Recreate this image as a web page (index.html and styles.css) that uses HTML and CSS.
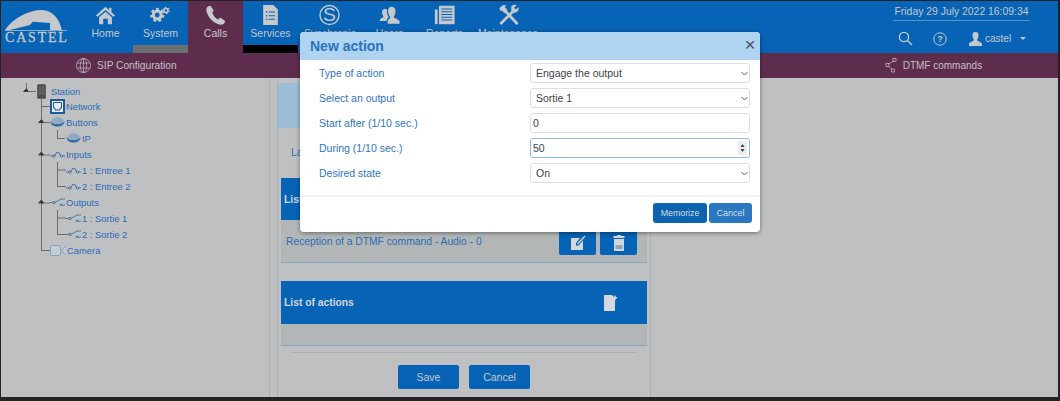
FILE: index.html
```html
<!DOCTYPE html>
<html lang="en">
<head>
<meta charset="utf-8">
<title>Castel - New action</title>
<link rel="stylesheet" href="styles.css">
</head>
<body>
<div class="app">
  <header class="topbar">
    <div class="logo">
      <svg class="logo-mark" width="64" height="32" viewBox="0 0 64 32"><path class="logo-dome" d="M0 21 C8 9 24 1 36.7 1 C48 1 55 11 56.7 21 L45 21 L45 14 L27.7 12.7 L25 16 L5 21 Z"/><path class="logo-rule" d="M0 21.5 L62 21.5"/></svg>
      <span class="logo-text">CASTEL</span>
    </div>
    <nav class="nav">
      <a class="nav-item"><svg class="nav-icon" viewBox="0 0 24 24"><path d="M12 3 L1.5 12.5 L3.5 14 L12 6.5 L20.5 14 L22.5 12.5 L18.5 9 V4 H16 V6.8 Z"/><path d="M5 14.5 L12 8.5 L19 14.5 V22 H14.5 V16 H9.5 V22 H5 Z"/></svg><span>Home</span></a>
      <a class="nav-item nav-grey"><svg class="nav-icon gears" viewBox="0 0 24 24"><circle class="g-ring" cx="8.5" cy="12" r="4.3"/><circle class="g-teeth" cx="8.5" cy="12" r="6.6"/><circle class="g-ring-s" cx="18" cy="7" r="2.1"/><circle class="g-teeth-s" cx="18" cy="7" r="3.4"/></svg><span>System</span></a>
      <a class="nav-item nav-active"><svg class="nav-icon" viewBox="0 0 24 24"><path d="M4 2.5 C2 3.5 1.5 6 2.5 9 C4.5 15 9 20 15 22 C18 23 21 22.5 22 20.5 L22.5 18.5 L17.5 15 L14.5 16.8 C12 15.5 9.5 12.5 8.5 9.5 L10 7 L6.5 1.8 Z"/></svg><span>Calls</span></a>
      <a class="nav-item nav-black"><svg class="nav-icon" viewBox="0 0 24 24"><path fill-rule="evenodd" d="M4 1 H15 L20 6 V23 H4 Z M7 8 V9.5 H8.5 V8 Z M10 8.2 V9.3 H17 V8.2 Z M7 12 V13.5 H8.5 V12 Z M10 12.2 V13.3 H17 V12.2 Z M7 16 V17.5 H8.5 V16 Z M10 16.2 V17.3 H17 V16.2 Z"/></svg><span>Services</span></a>
      <a class="nav-item"><svg class="nav-icon" viewBox="0 0 24 24"><circle class="icon-ring" cx="12" cy="12" r="10.4"/><text class="icon-s" x="12" y="19" text-anchor="middle">S</text></svg><span>Synchronis</span></a>
      <a class="nav-item"><svg class="nav-icon" viewBox="0 0 24 24"><path d="M14 3 C17.5 3 19 6 18.5 9 C18 12 17 13 16.5 14.5 C18 16 22 16.5 23 19 V21.5 H10 V19 C10 17 12.5 16 13 14.5 C12 13 11 12 10.5 9 C10 6 11.5 3 14 3 Z"/><path d="M7 5.5 C8 5.3 9 5.6 9.4 6 C8.8 8.5 9.2 11.5 11 14 C11 15 9 16 8.8 18.5 H1.5 V17 C2 15.5 5 15 5.5 13.5 C4.5 12 3.8 10.5 3.8 9 C3.8 7 5 5.7 7 5.5 Z"/></svg><span>Users</span></a>
      <a class="nav-item"><svg class="nav-icon" viewBox="0 0 24 24"><path fill-rule="evenodd" d="M6 2 H23 V22 H6 Z M8.5 5 V6 H20.5 V5 Z M8.5 8 V9 H20.5 V8 Z M8.5 11 V12 H20.5 V11 Z M8.5 14 V15 H20.5 V14 Z M8.5 17 V18 H20.5 V17 Z"/><path d="M1.5 6 H4.5 V22 H1.5 Z"/></svg><span>Reports</span></a>
      <a class="nav-item"><svg class="nav-icon tools-icon" viewBox="0 0 24 24"><path class="t-line" d="M7 6 L21 21"/><path class="t-line" d="M18 7 L4 21"/><path d="M2 4.5 L6 1 L9.5 1.5 L8 3.5 L11 6.5 L7.5 10 L5 7 L3.5 7.5 Z"/><path d="M15 3 C16 1 19 .5 21 1.2 L18 4 L20 6 L23 3.2 C23.5 6 22.5 8.5 19.5 9.5 L17 9.5 L15 7.5 Z"/></svg><span>Maintenance</span></a>
    </nav>
    <div class="top-right">
      <div class="clock">Friday 29 July 2022 16:09:34</div>
      <div class="tools">
        <svg class="tool-icon" width="15" height="15" viewBox="0 0 15 15"><circle cx="6" cy="6" r="4.6"/><path d="M9.5 9.5 L14 14"/></svg>
        <svg class="tool-icon tool-help" width="14" height="14" viewBox="0 0 14 14"><circle cx="7" cy="7" r="6.2"/><text x="7" y="10.3" text-anchor="middle">?</text></svg>
        <span class="user"><svg class="user-icon" width="13" height="14" viewBox="0 0 13 14"><path d="M6.5 0 C9 0 9.8 2 9.5 4 C9.2 6 8.5 7 8 8 C9 9.5 12.5 10 13 12 V14 H0 V12 C.5 10 4 9.5 5 8 C4.5 7 3.8 6 3.5 4 C3.2 2 4 0 6.5 0 Z"/></svg>castel<i class="caret"></i></span>
      </div>
    </div>
  </header>

  <div class="subbar">
    <a class="sub-item sub-sip"><svg width="15" height="15" viewBox="0 0 15 15" class="sub-icon"><circle cx="7.5" cy="7.5" r="7"/><ellipse cx="7.5" cy="7.5" rx="3.2" ry="7"/><path d="M7.5 .5 V14.5 M1 5 H14 M1 10 H14"/></svg>SIP Configuration</a>
    <a class="sub-item sub-dtmf"><svg width="12" height="15" viewBox="0 0 12 15" class="sub-icon"><rect x="8" y=".5" width="3" height="3"/><rect x="1" y="5.5" width="3" height="3"/><rect x="6.5" y="11" width="3" height="3"/><path d="M8.5 3 L3.5 6 M3.5 8 L7 11.5"/></svg>DTMF commands</a>
  </div>

  <main class="content">
    <aside class="tree">
      <svg class="tree-lines" width="100" height="175" viewBox="0 0 100 175">
        <path d="M26.5 5 V13.5 H36 M41.5 20 V172.5 H50 M41.5 28.5 H50 M41.5 44.5 H50 M41.5 77 H50 M41.5 125 H50 M57.5 52 V60.5 H65 M57.5 84 V92 H66 M57.5 92 V108.5 H66 M57.5 132 V140 H66 M57.5 140 V156.5 H66"/>
        <path class="tree-knob" d="M23.5 13.5 L26.5 10.5 L28 13.5 Z M38.5 44.5 L41.5 41.5 L43.5 44.5 Z M38.5 77 L41.5 74 L43.5 77 Z M38.5 125 L41.5 122 L43.5 125 Z"/>
      </svg>
      <div class="node n0"><svg width="9" height="15" viewBox="0 0 9 15" class="ic-station"><rect width="9" height="15" rx="1.5"/><path d="M3 2 V11 M6 2 V11"/></svg><span>Station</span></div>
      <div class="node n1"><svg width="15" height="15" viewBox="0 0 15 15" class="ic-net"><rect x="1" y="1" width="13" height="13"/><path d="M3.5 3.5 H11.5 V9 H10 V11 H5 V9 H3.5 Z"/></svg><span>Network</span></div>
      <div class="node n1"><svg width="15" height="10" viewBox="0 0 15 10" class="ic-btn"><ellipse cx="7.5" cy="3.5" rx="6" ry="3.2"/><path d="M.5 4 C.5 8 4 9.5 7.5 9.5 C11 9.5 14.5 8 14.5 4 C13 6.5 10 7 7.5 7 C5 7 2 6.5 .5 4 Z"/></svg><span>Buttons</span></div>
      <div class="node n2"><svg width="15" height="10" viewBox="0 0 15 10" class="ic-btn"><ellipse cx="7.5" cy="3.5" rx="6" ry="3.2"/><path d="M.5 4 C.5 8 4 9.5 7.5 9.5 C11 9.5 14.5 8 14.5 4 C13 6.5 10 7 7.5 7 C5 7 2 6.5 .5 4 Z"/></svg><span>IP</span></div>
      <div class="node n1"><svg width="15" height="7" viewBox="0 0 15 7" class="ic-sw"><path d="M0 5 H2.5 M5 5 L6.5 1.5 H9 L10.5 5 M12.5 5 H15"/><circle cx="3.8" cy="5" r="1.2"/><circle cx="11.5" cy="5" r="1.2"/></svg><span>Inputs</span></div>
      <div class="node n2"><svg width="15" height="7" viewBox="0 0 15 7" class="ic-sw"><path d="M0 5 H2.5 M5 5 L6.5 1.5 H9 L10.5 5 M12.5 5 H15"/><circle cx="3.8" cy="5" r="1.2"/><circle cx="11.5" cy="5" r="1.2"/></svg><span>1 : Entree 1</span></div>
      <div class="node n2"><svg width="15" height="7" viewBox="0 0 15 7" class="ic-sw"><path d="M0 5 H2.5 M5 5 L6.5 1.5 H9 L10.5 5 M12.5 5 H15"/><circle cx="3.8" cy="5" r="1.2"/><circle cx="11.5" cy="5" r="1.2"/></svg><span>2 : Entree 2</span></div>
      <div class="node n1"><svg width="15" height="8" viewBox="0 0 15 8" class="ic-sw"><path d="M0 4.5 H3 M5 4.5 L11 1 M11 1 H15 M12 7 H15"/><circle cx="4" cy="4.5" r="1.2"/><circle cx="11" cy="7" r="1"/></svg><span>Outputs</span></div>
      <div class="node n2"><svg width="15" height="8" viewBox="0 0 15 8" class="ic-sw"><path d="M0 4.5 H3 M5 4.5 L11 1 M11 1 H15 M12 7 H15"/><circle cx="4" cy="4.5" r="1.2"/><circle cx="11" cy="7" r="1"/></svg><span>1 : Sortie 1</span></div>
      <div class="node n2"><svg width="15" height="8" viewBox="0 0 15 8" class="ic-sw"><path d="M0 4.5 H3 M5 4.5 L11 1 M11 1 H15 M12 7 H15"/><circle cx="4" cy="4.5" r="1.2"/><circle cx="11" cy="7" r="1"/></svg><span>2 : Sortie 2</span></div>
      <div class="node n1"><svg width="16" height="11" viewBox="0 0 16 11" class="ic-cam"><rect x=".5" y=".5" width="10" height="10" rx="1"/><path d="M15.5 1 L12 5.5 L15.5 10"/></svg><span>Camera</span></div>
    </aside>

    <section class="panel">
      <div class="panel-head"></div>
      <div class="panel-label">Label</div>
      <div class="list-head">List of events</div>
      <div class="list-row">
        <span class="row-text">Reception of a DTMF command - Audio - 0</span>
        <span class="row-btns">
          <button class="icon-btn"><svg width="16" height="16" viewBox="0 0 16 16"><path class="paper" d="M1 3 H10 L6 8 V10.5 H8.5 L13 5.5 V15 H1 Z"/><path class="pen" d="M7.5 9 L15 1"/></svg></button>
          <button class="icon-btn"><svg width="12" height="16" viewBox="0 0 12 16"><path class="paper" d="M4 0 H8 V1 H11.5 V3 H.5 V1 H4 Z M1 4 H11 V16 H1 Z"/><rect class="tone" x="2.5" y="10" width="7" height="4"/></svg></button>
        </span>
      </div>
      <div class="list-head list-head-actions">List of actions
        <svg class="new-doc" width="14" height="16" viewBox="0 0 14 16"><path class="paper" d="M0 0 H8 L11 3 V16 H0 Z"/><path class="plus" d="M11 .5 V5 M8.8 2.7 H13.2"/></svg>
      </div>
      <div class="list-row list-row-empty"></div>
      <hr class="rule">
      <div class="panel-actions">
        <button class="btn">Save</button>
        <button class="btn">Cancel</button>
      </div>
    </section>
  </main>

  <div class="modal">
    <div class="modal-head"><h2>New action</h2><span class="close">×</span></div>
    <form class="modal-body">
      <div class="field"><label>Type of action</label><div class="control"><select><option>Engage the output</option></select><svg class="chev" width="7" height="5" viewBox="0 0 7 5"><path d="M.5 1 L3.5 4 L6.5 1"/></svg></div></div>
      <div class="field"><label>Select an output</label><div class="control"><select><option>Sortie 1</option></select><svg class="chev" width="7" height="5" viewBox="0 0 7 5"><path d="M.5 1 L3.5 4 L6.5 1"/></svg></div></div>
      <div class="field"><label>Start after (1/10 sec.)</label><div class="control"><input type="text" value="0"></div></div>
      <div class="field"><label>During (1/10 sec.)</label><div class="control"><input class="focused" type="text" value="50"><svg class="spin" width="9" height="14" viewBox="0 0 9 14"><rect width="9" height="14"/><path d="M4.5 3 L6.5 6 H2.5 Z M4.5 11 L6.5 8 H2.5 Z"/></svg></div></div>
      <div class="field"><label>Desired state</label><div class="control"><select><option>On</option></select><svg class="chev" width="7" height="5" viewBox="0 0 7 5"><path d="M.5 1 L3.5 4 L6.5 1"/></svg></div></div>
    </form>
    <div class="modal-foot">
      <button class="mbtn">Memorize</button>
      <button class="mbtn mbtn-light">Cancel</button>
    </div>
  </div>
</div>
</body>
</html>
```
FILE: styles.css
```css
* { box-sizing: border-box; }
html, body { margin: 0; height: 100%; }
body {
  background: #232325;
  font-family: "Liberation Sans", Arial, sans-serif;
  overflow: hidden;
}
.app {
  position: relative;
  width: 1057px;
  height: 396px;
  margin: 1px 0 0 1px;
  display: flex;
  flex-direction: column;
  overflow: hidden;
}

/* top bar */
.topbar {
  height: 52px;
  flex: none;
  display: flex;
  background: #0763b5;
  color: #c4c8cc;
}
.logo {
  width: 77px;
  flex: none;
  position: relative;
  padding: 8px 0 0 4px;
}
.logo-mark { display: block; }
.logo-dome { fill: #c6c8ca; }
.logo-rule { stroke: #c6c8ca; stroke-width: .7; fill: none; }
.logo-text {
  position: absolute;
  left: 4px;
  top: 28px;
  font: 14px/18px "Liberation Serif", serif;
  letter-spacing: 1.8px;
  color: #c6c8ca;
  -webkit-text-stroke: .3px #c6c8ca;
}
.nav { display: flex; height: 52px; }
.nav-item {
  min-width: 55px;
  padding: 3px 6px 0;
  display: flex;
  flex-direction: column;
  align-items: center;
  font-size: 10.5px;
  line-height: 14px;
}
.nav-icon { width: 23px; height: 22px; fill: #c6c9cc; flex: none; }
.nav-grey { border-bottom: 8px solid #6c7072; }
.nav-black { border-bottom: 8px solid #000; }
.nav-active { background: #5e2d4d; }
.icon-ring { fill: none; stroke: #c6c9cc; stroke-width: 1.5; }
.icon-s { font: 21px "Liberation Sans", sans-serif; fill: #c6c9cc; }
.gears circle { fill: none; stroke: #c6c9cc; }
.g-ring { stroke-width: 3.4; }
.g-teeth { stroke-width: 2.4; stroke-dasharray: 2.9 2.9; }
.g-ring-s { stroke-width: 1.6; }
.g-teeth-s { stroke-width: 1.4; stroke-dasharray: 1.8 1.76; }
.t-line { fill: none; stroke: #c6c9cc; stroke-width: 3; stroke-linecap: round; }

.top-right {
  margin-left: auto;
  width: 165px;
  padding: 4px 28px 0 0;
  display: flex;
  flex-direction: column;
  align-items: flex-end;
}
.clock {
  width: 137px;
  height: 16px;
  font-size: 10.4px;
  line-height: 14px;
  text-align: center;
  border-bottom: 1px solid #5d92c4;
  white-space: nowrap;
}
.tools {
  width: 137px;
  margin-top: 10px;
  display: flex;
  align-items: center;
  font-size: 10px;
  padding-left: 5px;
}
.tool-icon { fill: none; stroke: #c6c9cc; stroke-width: 1.4; }
.tool-help { margin-left: 20px; stroke-width: 1; }
.tool-help text { font: bold 9px "Liberation Sans", sans-serif; fill: #c6c9cc; stroke: none; }
.user { display: flex; align-items: center; margin-left: 22px; gap: 3px; }
.user-icon { fill: #c6c9cc; }
.caret {
  margin-left: 6px;
  width: 0;
  height: 0;
  border: 3px solid transparent;
  border-top: 3px solid #c6c9cc;
  border-bottom: 0;
}

/* sub bar */
.subbar {
  height: 25px;
  flex: none;
  background: #5e2d4d;
  display: flex;
  align-items: center;
  color: #c4c0c4;
  font-size: 10.2px;
  padding-left: 75px;
}
.sub-item { display: flex; align-items: center; }
.sub-icon { fill: none; stroke: #c4c0c4; stroke-width: .7; }
.sub-sip { gap: 6px; }
.sub-dtmf { gap: 6px; margin-left: 708px; font-size: 10px; }

/* content */
.content {
  flex: 1;
  display: flex;
  background: #bfc0c2;
  min-height: 0;
}
.tree {
  position: relative;
  width: 269px;
  flex: none;
  padding-top: 6px;
  border-right: 1px solid #adb0b2;
  color: #2a6cb8;
  font-size: 9.4px;
}
.tree-lines {
  position: absolute;
  left: -1px;
  top: 0;
  fill: none;
  stroke: #55585a;
  stroke-width: .8;
}
.tree-knob { fill: #333; stroke: #333; }
.node {
  position: relative;
  height: 16px;
  display: flex;
  align-items: center;
  white-space: nowrap;
}
.n0 { padding-left: 36px; gap: 5px; height: 14px; }
.n1 { padding-left: 49px; gap: 1px; }
.n2 { padding-left: 65px; gap: 1px; }
.ic-station { fill: #4c4e52; stroke: #9a9c9e; stroke-width: .6; }
.ic-net { fill: #e6ecf2; stroke: #1a5a9c; stroke-width: 2; }
.ic-net path { fill: none; stroke: #1a5a9c; stroke-width: 1; }
.ic-btn ellipse { fill: #8fa9c2; }
.ic-btn path { fill: #2c6aa8; }
.ic-sw { fill: none; stroke: #3b70a8; stroke-width: .9; }
.ic-cam { fill: #c4cdd6; stroke: #7a9cc0; stroke-width: .9; }

.panel {
  width: 374px;
  flex: none;
  margin-left: 7px;
  padding: 5px 3px 0 3px;
  border-left: 1px solid #adb0b2;
  border-right: 1px solid #adb0b2;
  color: #2a6cb8;
  font-size: 10.3px;
}
.panel-head {
  height: 45px;
  margin-left: -3px;
  background: #9dbdd6;
  border-radius: 4px 4px 0 0;
}
.panel-label {
  height: 50px;
  padding: 18px 0 0 10px;
  line-height: 14px;
}
.list-head {
  height: 42px;
  background: #0763b5;
  color: #d2d6da;
  font-weight: bold;
  display: flex;
  align-items: center;
  padding-left: 3px;
  position: relative;
}
.list-head-actions { height: 43px; margin-top: 18px; }
.new-doc { position: absolute; left: 323px; top: 14px; }
.list-row {
  height: 43px;
  background: #b3b6b7;
  border-bottom: 1px solid #84a4c4;
  display: flex;
  align-items: flex-start;
  justify-content: space-between;
  padding: 10px 10px 0 5px;
}
.list-row-empty { height: 22px; padding: 0; }
.row-text { line-height: 23px; }
.row-btns { display: flex; gap: 4px; }
.icon-btn {
  width: 37px;
  height: 25px;
  padding: 0;
  background: #0763b5;
  border: 0;
  border-radius: 2px;
  display: flex;
  align-items: center;
  justify-content: center;
}
.paper { fill: #d5d8da; }
.pen { stroke: #d5d8da; stroke-width: 1.3; fill: none; }
.tone { fill: #8ea6bc; }
.plus { stroke: #d5d8da; stroke-width: 1.4; fill: none; }
.rule {
  margin: 6px 10px 12px 10px;
  border: 0;
  border-top: 1px solid #adb0b2;
}
.panel-actions { display: flex; justify-content: center; gap: 10px; }
.btn {
  width: 61px;
  height: 24px;
  background: #0763b5;
  color: #c4c8cc;
  border: 0;
  border-radius: 2px;
  font: 10.5px "Liberation Sans", sans-serif;
  padding: 0;
}

/* modal */
.modal {
  position: absolute;
  left: 299px;
  top: 31px;
  width: 460px;
  height: 200px;
  background: #fff;
  border-radius: 4px;
  box-shadow: 0 1px 4px rgba(0,0,0,.45);
  overflow: hidden;
}
.modal-head {
  height: 28px;
  background: #aed4f2;
  display: flex;
  align-items: center;
  justify-content: space-between;
  padding: 0 4px 0 10px;
}
.modal-head h2 {
  margin: 0;
  font-size: 14px;
  line-height: 28px;
  font-weight: bold;
  color: #2a72c0;
}
.close { font-size: 19px; line-height: 20px; color: #4b5660; margin-top: -3px; width: 12px; text-align: center; }
.modal-body {
  height: 135px;
  padding: 0 10px 0 19px;
  display: flex;
  flex-direction: column;
}
.field {
  height: 25px;
  flex: none;
  display: flex;
  align-items: center;
  justify-content: space-between;
}
.field label { font-size: 10.5px; color: #2e75c4; }
.control { position: relative; width: 220px; height: 20px; }
.control select, .control input {
  width: 100%;
  height: 100%;
  display: block;
  border: 1px solid #dcdfe2;
  border-radius: 3px;
  background: #fff;
  font: 10.5px "Liberation Sans", sans-serif;
  color: #3d4248;
  appearance: none;
  outline: 0;
}
.control select { padding: 0 0 0 5px; }
.control input { padding: 0 0 0 2px; }
.control .focused { border-color: #8dbcea; }
.chev {
  position: absolute;
  right: 2px;
  top: 8px;
  fill: none;
  stroke: #5a6068;
  stroke-width: 1;
  pointer-events: none;
}
.spin { position: absolute; right: 3px; top: 3px; }
.spin rect { fill: #ebebeb; }
.spin path { fill: #3d4248; }
.modal-foot {
  height: 37px;
  border-top: 2px solid #eef0f1;
  display: flex;
  justify-content: flex-end;
  gap: 2px;
  padding: 6px 8px 0 0;
}
.mbtn {
  width: 54px;
  height: 20px;
  padding: 0;
  border: 0;
  border-radius: 3px;
  background: #0c63ae;
  color: #d6dde4;
  font: 8.8px "Liberation Sans", sans-serif;
}
.mbtn-light { width: 43px; background: #2a78c0; font-size: 9px; }
```
